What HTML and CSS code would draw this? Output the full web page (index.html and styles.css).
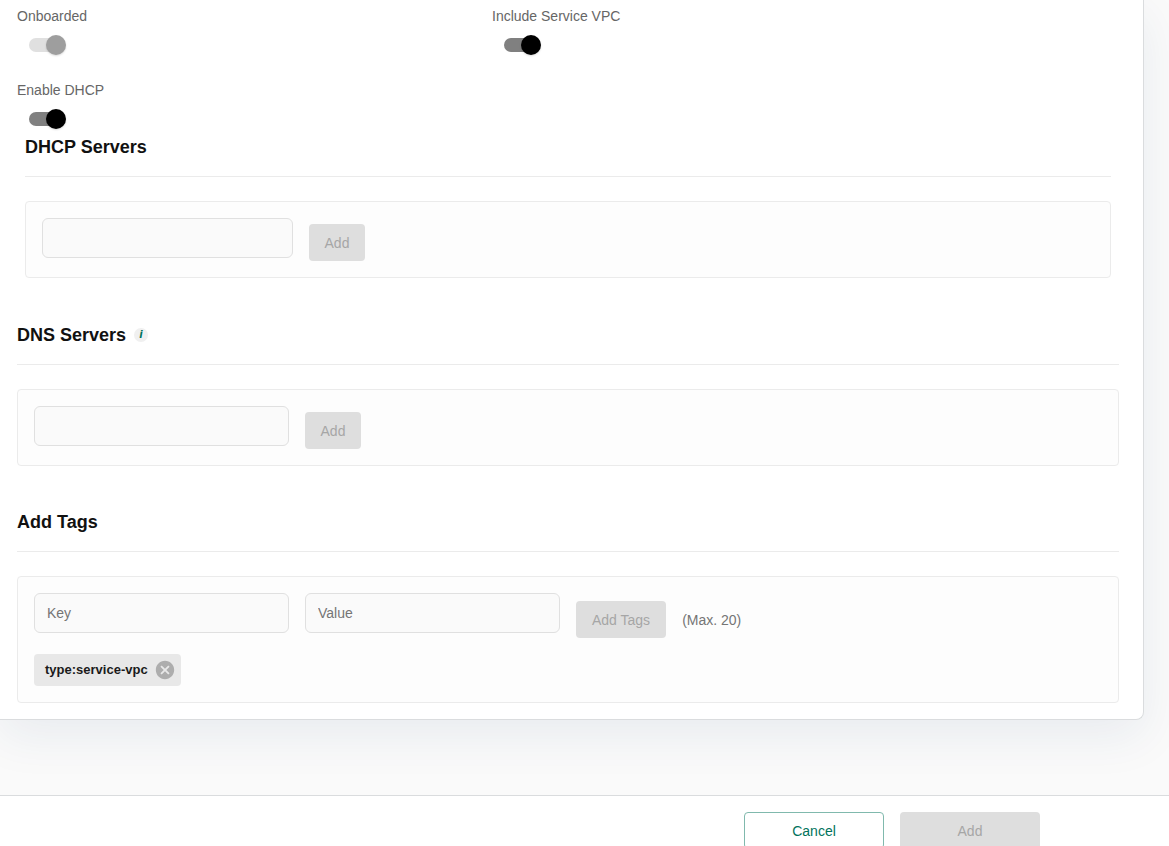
FILE: index.html
```html
<!DOCTYPE html>
<html lang="en">
<head>
  <meta charset="UTF-8">
  <meta name="viewport" content="width=device-width, initial-scale=1.0">
  <title>Add VPC</title>
  <link rel="stylesheet" href="styles.css">
</head>
<body>
  <form class="page">
    <main class="card">
      <div class="switches">
        <div class="field">
          <label for="onboarded">Onboarded</label>
          <input class="switch" type="checkbox" id="onboarded" checked disabled>
        </div>
        <div class="field">
          <label for="service-vpc">Include Service VPC</label>
          <input class="switch" type="checkbox" id="service-vpc" checked>
        </div>
        <div class="field">
          <label for="dhcp">Enable DHCP</label>
          <input class="switch" type="checkbox" id="dhcp" checked>
        </div>
      </div>

      <section class="section nested">
        <h2>DHCP Servers</h2>
        <div class="box">
          <input class="text-field" type="text" aria-label="DHCP server">
          <div class="action">
            <button type="button" class="btn" disabled>Add</button>
          </div>
        </div>
      </section>

      <section class="section">
        <h2>DNS Servers <span class="info">i</span></h2>
        <div class="box">
          <input class="text-field" type="text" aria-label="DNS server">
          <div class="action">
            <button type="button" class="btn" disabled>Add</button>
          </div>
        </div>
      </section>

      <section class="section">
        <h2>Add Tags</h2>
        <div class="box">
          <input class="text-field" type="text" placeholder="Key" aria-label="Key">
          <input class="text-field" type="text" placeholder="Value" aria-label="Value">
          <div class="action action-tags">
            <button type="button" class="btn" disabled>Add Tags</button>
            <span class="hint">(Max. 20)</span>
          </div>
          <div class="tags">
            <span class="chip">
              type:service-vpc
              <button type="button" class="chip-remove" aria-label="Remove tag">
                <svg viewBox="0 0 24 24" width="22" height="22"><path d="M12 2C6.47 2 2 6.47 2 12s4.47 10 10 10 10-4.47 10-10S17.53 2 12 2zm5 13.59L15.59 17 12 13.41 8.41 17 7 15.59 10.59 12 7 8.41 8.41 7 12 10.59 15.59 7 17 8.41 13.41 12 17 15.59z"/></svg>
              </button>
            </span>
          </div>
        </div>
      </section>
    </main>

    <footer class="footer">
      <button type="button" class="btn btn-wide btn-outline">Cancel</button>
      <button type="submit" class="btn btn-wide" disabled>Add</button>
    </footer>
  </form>
</body>
</html>
```
FILE: styles.css
```css
* {
  box-sizing: border-box;
}
body {
  margin: 0;
  font-family: "Liberation Sans", Arial, sans-serif;
  font-size: 14px;
  line-height: 20px;
  color: #666;
  background-color: #fafafa;
}
.page {
  height: 100vh;
  overflow: auto;
  scrollbar-width: none;
}
.card {
  margin: 0 25px 75px 0;
  padding: 6px 24px 16px 17px;
  background-color: #fff;
  border: 1px solid #dadcde;
  border-top: 0;
  border-left: 0;
  border-radius: 0 0 8px 0;
  box-shadow: 0 16px 48px rgba(30, 60, 110, 0.08);
}

/* switches */
.switches {
  display: grid;
  grid-template-columns: 1fr 1fr;
  gap: 16px;
  max-width: 934px;
}
.field {
  display: flex;
  flex-direction: column;
  align-items: flex-start;
}
.switch {
  appearance: none;
  display: flex;
  align-items: center;
  width: 34px;
  height: 14px;
  margin: 12px;
  border-radius: 7px;
  background-color: #808080;
}
.switch::before {
  content: "";
  width: 20px;
  height: 20px;
  flex-shrink: 0;
  border-radius: 50%;
  background-color: #000;
  box-shadow: 0 1px 2px rgba(0, 0, 0, 0.15);
}
.switch:checked::before {
  margin-left: 17px;
}
.switch:disabled {
  background-color: #e0e0e0;
}
.switch:disabled::before {
  background-color: #9e9e9e;
}

/* sections */
.section {
  margin-bottom: 47px;
}
.section:last-child {
  margin-bottom: 0;
}
.nested {
  margin: 0 8px 48px;
}
h2 {
  display: flex;
  align-items: center;
  gap: 8px;
  margin: 0 0 24px;
  padding-bottom: 20px;
  border-bottom: 1px solid #ebebeb;
  color: #111;
  font-size: 18px;
  line-height: 18px;
}
.info {
  width: 14px;
  height: 14px;
  border-radius: 50%;
  background-color: #f0f0f0;
  color: #01735c;
  font: italic bold 10px/14px "DejaVu Sans", sans-serif;
  text-align: center;
}
.box {
  display: grid;
  grid-template-columns: repeat(4, 1fr);
  column-gap: 16px;
  padding: 16px;
  border: 1px solid #ebebeb;
  border-radius: 4px;
  background-color: #fdfdfd;
}
.text-field {
  width: 100%;
  height: 40px;
  padding: 0 12px;
  border: 1px solid #e0e0e0;
  border-radius: 6px;
  background-color: #fafafa;
  font: inherit;
}
.text-field::placeholder {
  color: #757575;
}
.action {
  display: flex;
  align-items: center;
  gap: 16px;
  padding-top: 6px;
}
.action-tags {
  padding-top: 8px;
}
.action-tags .btn {
  padding: 0 16px;
}
.hint {
  color: #757575;
}

/* buttons */
.btn {
  height: 37px;
  min-width: 56px;
  padding: 0 15px;
  border: 0;
  border-radius: 4px;
  background-color: #dedede;
  color: #a6a6a6;
  font: inherit;
}
.btn-wide {
  width: 140px;
}
.btn-outline {
  border: 1px solid #80b9ad;
  background-color: #fff;
  color: #01735c;
}

/* tags */
.tags {
  grid-column: 1 / -1;
  margin-top: 16px;
}
.chip {
  display: inline-flex;
  align-items: center;
  gap: 6px;
  height: 32px;
  padding: 0 5px 0 11px;
  border-radius: 4px;
  background-color: #e8e8e8;
  color: #1a1a1a;
  font-size: 13px;
  font-weight: bold;
  vertical-align: top;
}
.chip-remove {
  display: flex;
  padding: 0;
  border: 0;
  background: none;
}
.chip-remove svg {
  fill: #adadad;
}

.footer {
  display: flex;
  justify-content: flex-end;
  gap: 16px;
  padding: 16px 129px 16px 16px;
  border-top: 1px solid #dadcde;
  background-color: #fff;
}
```
